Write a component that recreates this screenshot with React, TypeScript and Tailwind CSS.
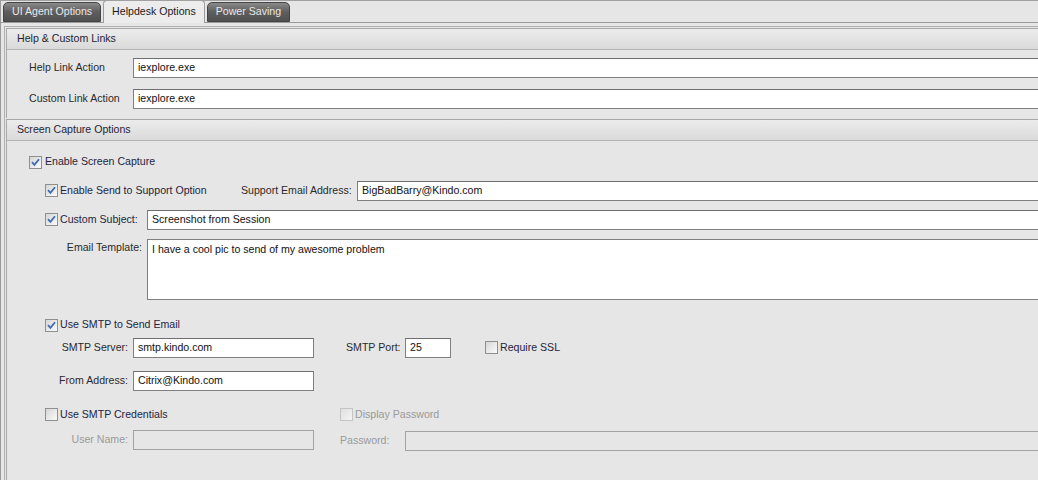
import React from 'react';

const FONT = { fontFamily: '"Liberation Sans", Arial, sans-serif' };

/** Small classic checkbox with optional blue tick. */
function Check({ checked = false, disabled = false }: { checked?: boolean; disabled?: boolean }): React.ReactElement {
  return (
    <span
      className={
        'inline-flex w-[13px] h-[13px] shrink-0 items-center justify-center border ' +
        (disabled
          ? 'border-[#c4c4c4] bg-linear-to-br from-[#e0e0e0] to-[#f4f4f4]'
          : 'border-[#8e8f8f] bg-linear-to-br from-[#d6d6d6] to-[#fbfbfb]')
      }
    >
      {checked && (
        <svg width="9" height="9" viewBox="0 0 9 9" aria-hidden="true">
          <path d="M1 4.2 L3.4 6.8 L8 1.2" fill="none" stroke="#3d6db6" strokeWidth="1.8" />
        </svg>
      )}
    </span>
  );
}

function Field({ value = '', className = '', disabled = false }: { value?: string; className?: string; disabled?: boolean }): React.ReactElement {
  return (
    <div
      className={
        'h-[20px] border flex items-center px-[4px] text-[10.6px] text-[#111] whitespace-nowrap overflow-hidden ' +
        (disabled
          ? 'bg-[#e6e6e6] border-[#a3a3a3]'
          : 'bg-white border-[#7f7f7f] border-t-[#6f6f6f]') +
        ' ' +
        className
      }
    >
      {value}
    </div>
  );
}

function Tab({ label, active = false }: { label: string; active?: boolean }): React.ReactElement {
  if (active) {
    return (
      <div className="h-[23px] -mb-px px-[8px] flex items-center rounded-t-[4px] border border-b-0 border-[#9c9c9c] bg-[#ececec] text-[#1a1a1a] relative z-10">
        {label}
      </div>
    );
  }
  return (
    <div className="h-[20px] mt-[2px] px-[8px] flex items-center rounded-t-[5px] border border-[#444] bg-linear-to-b from-[#8a8a8a] via-[#5e5e5e] to-[#505050] text-[#e8e8e8]">
      {label}
    </div>
  );
}

function SectionHeader({ title }: { title: string }): React.ReactElement {
  return (
    <div className="h-[21px] flex items-center pl-[10px] border-b border-[#b4b4b4] bg-linear-to-b from-[#ececec] to-[#dadada] text-[#1f1f33]">
      {title}
    </div>
  );
}

export default function App(): React.ReactElement {
  return (
    <div className="w-[1038px] h-[480px] overflow-hidden bg-[#e6e6e6] border-t border-[#a0a0a0] text-[10.6px]" style={FONT}>
      <div className="w-[1070px] h-full flex flex-col border-l border-[#9a9a9a]">
        {/* Tab strip */}
        <div className="h-[22px] flex items-end gap-[2px] pl-[2px] border-b border-[#9a9a9a]">
          <Tab label="UI Agent Options" />
          <Tab label="Helpdesk Options" active />
          <Tab label="Power Saving" />
        </div>

        {/* Tab page */}
        <div className="flex-1 ml-[3px] mt-[3px] border-l border-t border-[#b0b0b0] pl-[1px] pt-[1px] flex flex-col">
          {/* Help & Custom Links */}
          <div className="border-t border-l border-[#a8a8a8] flex flex-col">
            <SectionHeader title="Help & Custom Links" />
            <div className="pt-[8px] pb-[9px] flex flex-col gap-[11px] text-[#2a2a2a]">
              <div className="flex items-center">
                <span className="w-[126px] pl-[22px]">Help Link Action</span>
                <Field value="iexplore.exe" className="flex-1" />
              </div>
              <div className="flex items-center">
                <span className="w-[126px] pl-[22px]">Custom Link Action</span>
                <Field value="iexplore.exe" className="flex-1" />
              </div>
            </div>
          </div>

          {/* Screen Capture Options */}
          <div className="flex-1 border-t border-l border-[#a8a8a8] mt-px flex flex-col">
            <SectionHeader title="Screen Capture Options" />
            <div className="flex flex-col text-[#2a2a2a]">
              <div className="h-[20px] mt-[11px] flex items-center pl-[22px] gap-[3px] text-[#1e1e40]">
                <Check checked />
                <span>Enable Screen Capture</span>
              </div>

              <div className="h-[20px] mt-[9px] flex items-center pl-[38px]">
                <div className="w-[196px] flex items-center gap-[2px] text-[#1e1e40]">
                  <Check checked />
                  <span>Enable Send to Support Option</span>
                </div>
                <span className="w-[116px] whitespace-nowrap">Support Email Address:</span>
                <Field value="BigBadBarry@Kindo.com" className="flex-1" />
              </div>

              <div className="h-[20px] mt-[9px] flex items-center pl-[38px]">
                <div className="w-[102px] flex items-center gap-[2px] text-[#1e1e40]">
                  <Check checked />
                  <span>Custom Subject:</span>
                </div>
                <Field value="Screenshot from Session" className="flex-1" />
              </div>

              <div className="mt-[9px] flex items-start pl-[38px]">
                <span className="w-[102px] pr-[5px] text-right pt-[1px]">Email Template:</span>
                <div className="flex-1 h-[61px] bg-white border border-[#7f7f7f] px-[4px] pt-[2px] text-[#111]">
                  I have a cool pic to send of my awesome problem
                </div>
              </div>

              <div className="h-[20px] mt-[15px] flex items-center pl-[38px] gap-[2px] text-[#1e1e40]">
                <Check checked />
                <span>Use SMTP to Send Email</span>
              </div>

              <div className="h-[20px] mt-[3px] flex items-center pl-[38px]">
                <span className="w-[88px] pr-[5px] text-right whitespace-nowrap">SMTP Server:</span>
                <Field value="smtp.kindo.com" className="w-[181px]" />
                <span className="ml-[32px] w-[59px] whitespace-nowrap">SMTP Port:</span>
                <Field value="25" className="w-[46px]" />
                <div className="ml-[34px] flex items-center gap-[2px] text-[#1e1e40]">
                  <Check />
                  <span>Require SSL</span>
                </div>
              </div>

              <div className="h-[20px] mt-[13px] flex items-center pl-[38px]">
                <span className="w-[88px] pr-[5px] text-right whitespace-nowrap">From Address:</span>
                <Field value="Citrix@Kindo.com" className="w-[181px]" />
              </div>

              <div className="h-[20px] mt-[14px] flex items-center pl-[38px]">
                <div className="w-[295px] flex items-center gap-[2px] text-[#1e1e40]">
                  <Check />
                  <span>Use SMTP Credentials</span>
                </div>
                <div className="flex items-center gap-[2px] text-[#9a9a9a]">
                  <Check disabled />
                  <span>Display Password</span>
                </div>
              </div>

              <div className="h-[20px] mt-[5px] flex items-center pl-[38px] text-[#9a9a9a]">
                <span className="w-[88px] pr-[5px] text-right whitespace-nowrap">User Name:</span>
                <Field disabled className="w-[181px]" />
                <span className="ml-[26px] w-[65px] whitespace-nowrap mt-[1px]">Password:</span>
                <Field disabled className="flex-1 mt-[2px]" />
              </div>
            </div>
          </div>
        </div>
      </div>
    </div>
  );
}
